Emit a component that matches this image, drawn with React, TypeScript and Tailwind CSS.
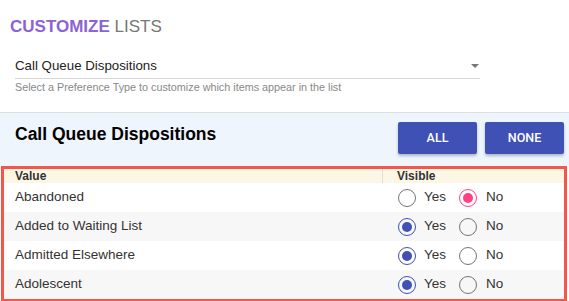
type TRow = { label: string; visible: boolean; tone: 'white' | 'gray' };

const rows: TRow[] = [
  { label: 'Abandoned', visible: false, tone: 'white' },
  { label: 'Added to Waiting List', visible: true, tone: 'gray' },
  { label: 'Admitted Elsewhere', visible: true, tone: 'white' },
  { label: 'Adolescent', visible: true, tone: 'gray' },
];

const Radio = ({ checked, color }: { checked: boolean; color: 'blue' | 'pink' }) => {
  const ring = !checked ? 'border-[#757575]' : color === 'blue' ? 'border-[#3f51b5]' : 'border-[#ff4081]';
  const dot = color === 'blue' ? 'bg-[#3f51b5]' : 'bg-[#ff4081]';
  return (
    <span className={`flex h-[18px] w-[18px] items-center justify-center rounded-full border-[1.5px] ${ring}`}>
      {checked && <span className={`h-[10px] w-[10px] rounded-full ${dot}`} />}
    </span>
  );
};

export default function App() {
  return (
    <div className="h-[301px] w-[569px] overflow-hidden bg-white font-['Liberation_Sans',Arial,sans-serif]">
      <div className="px-[10px] pt-[17px]">
        <h1 className="text-[17px] leading-[20px]">
          <span className="font-bold text-[#8b63d6]">CUSTOMIZE</span>{' '}
          <span className="text-[#777]">LISTS</span>
        </h1>
      </div>

      <div className="ml-[15px] mt-[21px] w-[465px]">
        <div className="flex items-center justify-between border-b border-[#d6d6d6] pb-[4px]">
          <span className="text-[13.3px] leading-[16px] text-[#222]">Call Queue Dispositions</span>
          <span className="mr-[1px] h-0 w-0 border-x-[4px] border-t-[4px] border-x-transparent border-t-[#777]" />
        </div>
        <p className="mt-[2px] text-[10.8px] leading-[13px] text-[#888]">
          Select a Preference Type to customize which items appear in the list
        </p>
      </div>

      <div className="mt-[18px] flex h-[54px] items-start justify-between border-t border-[#e0e0e0] bg-[#eef5fc] pl-[15px] pr-[5px]">
        <h2 className="mt-[10px] text-[17.5px] font-bold leading-[22px] text-black">
          Call Queue Dispositions
        </h2>
        <div className="mt-[9px] flex gap-[8px]">
          <button className="h-[32px] w-[79px] rounded-[2px] bg-[#3f51b5] text-[12.5px] font-medium text-white shadow-[0_2px_3px_rgba(0,0,0,0.25)] font-['Roboto',sans-serif]">
            ALL
          </button>
          <button className="h-[32px] w-[79px] rounded-[2px] bg-[#3f51b5] text-[12.5px] font-medium text-white shadow-[0_2px_3px_rgba(0,0,0,0.25)] font-['Roboto',sans-serif]">
            NONE
          </button>
        </div>
      </div>

      <div className="ml-[1px] w-[566px] border-[3px] border-[#f5564a]">
        <div className="flex h-[14px] bg-[#fcf7e5] text-[12px] font-bold leading-[14px] text-[#333]">
          <div className="w-[379px] border-r border-[#ddd] pl-[11px]">Value</div>
          <div className="pl-[14px]">Visible</div>
        </div>
        {rows.map((row) => (
          <div
            key={row.label}
            className={`flex h-[29px] items-center text-[13.5px] text-[#333] ${row.tone === 'gray' ? 'bg-[#f7f7f7]' : 'bg-white'}`}
          >
            <div className="w-[380px] pl-[11px]">{row.label}</div>
            <div className="flex items-center pl-[14px]">
              <Radio checked={row.visible} color="blue" />
              <span className="ml-[8px] w-[35px]">Yes</span>
              <Radio checked={!row.visible} color="pink" />
              <span className="ml-[9px]">No</span>
            </div>
          </div>
        ))}
      </div>
    </div>
  );
}
